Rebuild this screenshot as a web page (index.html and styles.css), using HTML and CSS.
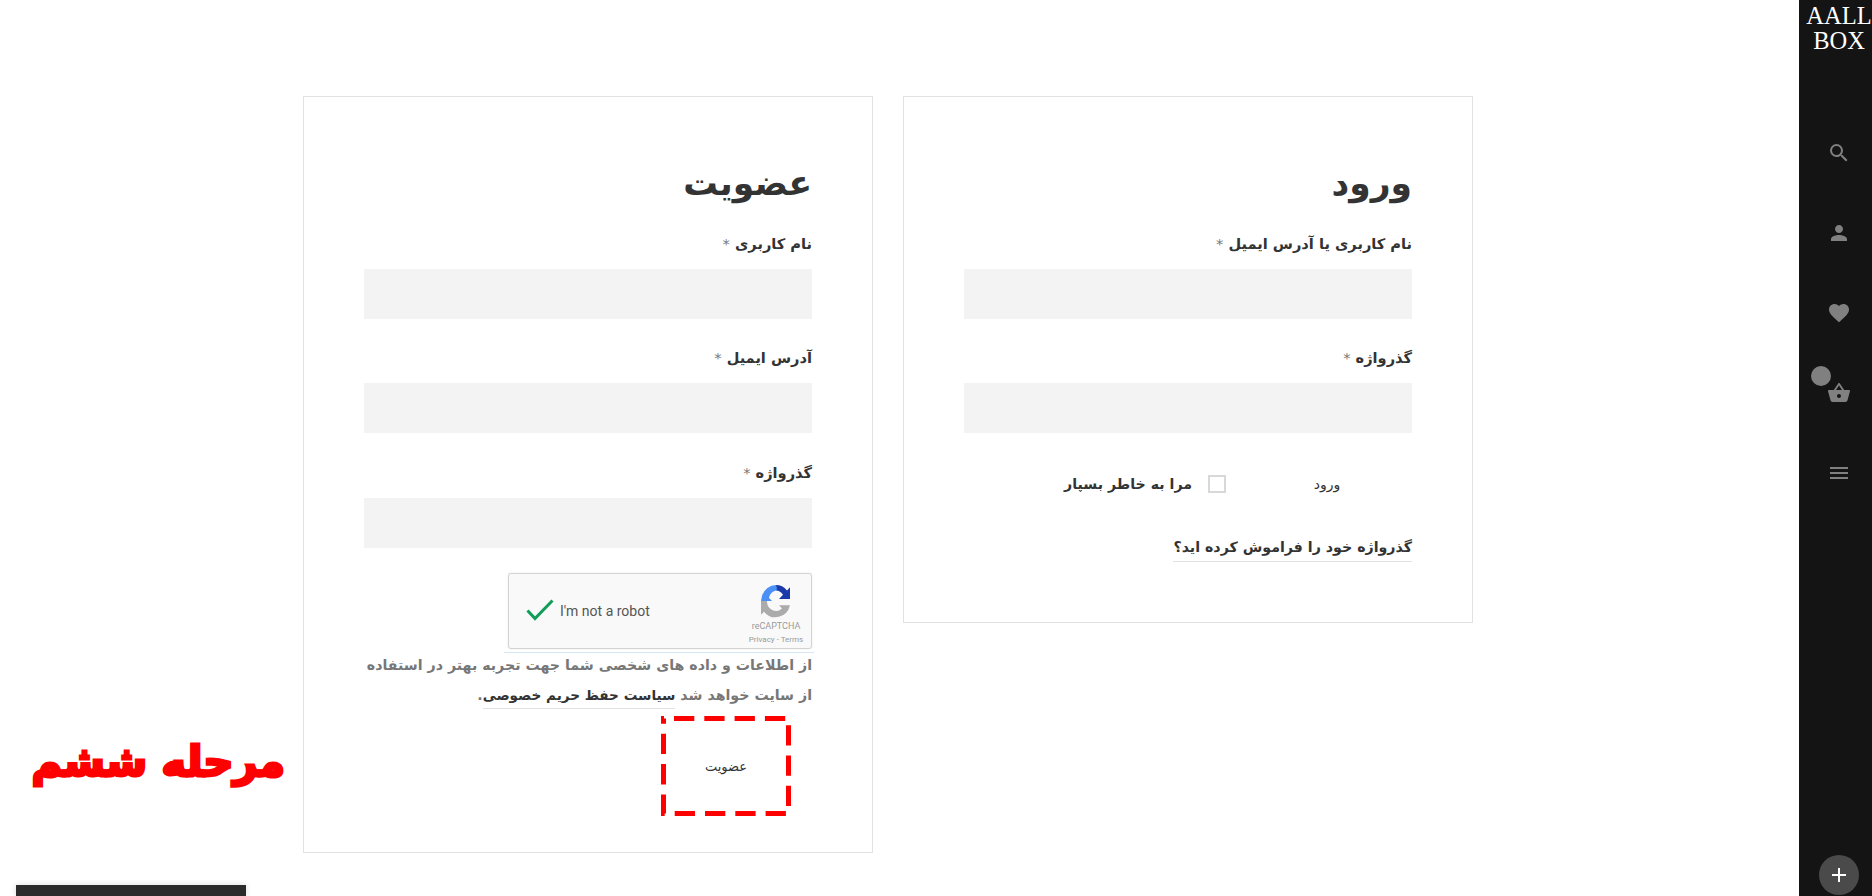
FILE: index.html
```html
<!DOCTYPE html>
<html lang="fa">
<head>
<meta charset="UTF-8">
<title>حساب کاربری</title>
<link rel="stylesheet" href="styles.css">
</head>
<body>

<main class="page">
    <section class="card">
        <h2 class="card-title">ورود</h2>
        <div class="field">
            <label class="field-label">نام کاربری یا آدرس ایمیل <span class="req">*</span></label>
            <div class="field-input"></div>
        </div>
        <div class="field">
            <label class="field-label">گذرواژه <span class="req">*</span></label>
            <div class="field-input"></div>
        </div>
        <div class="login-row">
            <button class="btn">ورود</button>
            <span class="checkbox"></span>
            <span class="remember">مرا به خاطر بسپار</span>
        </div>
        <a class="forgot">گذرواژه خود را فراموش کرده اید؟</a>
    </section>

    <section class="card">
        <h2 class="card-title">عضویت</h2>
        <div class="field">
            <label class="field-label">نام کاربری <span class="req">*</span></label>
            <div class="field-input"></div>
        </div>
        <div class="field field-second">
            <label class="field-label">آدرس ایمیل <span class="req">*</span></label>
            <div class="field-input"></div>
        </div>
        <div class="field field-last">
            <label class="field-label">گذرواژه <span class="req">*</span></label>
            <div class="field-input"></div>
        </div>
        <div class="captcha-wrap">
            <div class="captcha" dir="ltr">
                <svg class="captcha-check" width="28" height="22" viewBox="0 0 28 22"><path d="M1.5 11.5 9 19.5 26.5 1.5" fill="none" stroke="#0f9d58" stroke-width="3"/></svg>
                <span class="captcha-text">I'm not a robot</span>
                <div class="captcha-brand">
                    <svg width="32" height="34" viewBox="0 0 32 32" preserveAspectRatio="none">
                        <path d="M16 1a15 15 0 0 1 11 5l3-3v11H19l4-4a9 9 0 0 0-7-4z" fill="#1c3aa9"/>
                        <path d="M16 1A15 15 0 0 0 2 11l-1 5h11l-2-2-1-1a9 9 0 0 1 7-7c2-.5 0-5 0-5z" fill="#4a90f5"/>
                        <path d="M1 16h6v1a9 9 0 0 0 15 6l-3-3h11A15 15 0 0 1 4 26l-3 3z" fill="#ababab"/>
                    </svg>
                    <span class="captcha-name">reCAPTCHA</span>
                    <span class="captcha-links">Privacy - Terms</span>
                </div>
            </div>
        </div>
        <p class="privacy">از اطلاعات و داده های شخصی شما جهت تجربه بهتر در استفاده از سایت خواهد شد <a class="privacy-link">سیاست حفظ حریم خصوصی</a>.</p>
        <button class="btn btn-marked">
            <svg class="dash-mark" width="130" height="100" viewBox="0 0 130 100"><rect x="2.5" y="2.5" width="125" height="95" fill="none" stroke="#f00" stroke-width="5" stroke-dasharray="20.3 10" stroke-dashoffset="-10.5"/></svg>
            عضویت
        </button>
    </section>
</main>

<div class="step-note">مرحله ششم</div>
<div class="bottom-tab"></div>

<aside class="sidebar">
    <div class="logo">AALL<br>BOX</div>
    <ul class="side-icons">
        <li><svg width="24" height="24" viewBox="0 0 24 24"><path d="M15.5 14h-.79l-.28-.27A6.471 6.471 0 0 0 16 9.5 6.5 6.5 0 1 0 9.5 16c1.61 0 3.09-.59 4.23-1.57l.27.28v.79l5 4.99L20.49 19l-4.99-5zm-6 0C7.01 14 5 11.99 5 9.5S7.01 5 9.5 5 14 7.01 14 9.5 11.99 14 9.5 14z"/></svg></li>
        <li><svg width="24" height="24" viewBox="0 0 24 24"><path d="M12 12c2.21 0 4-1.79 4-4s-1.79-4-4-4-4 1.79-4 4 1.79 4 4 4zm0 2c-2.67 0-8 1.34-8 4v2h16v-2c0-2.66-5.33-4-8-4z"/></svg></li>
        <li><svg width="24" height="24" viewBox="0 0 24 24"><path d="M12 21.35l-1.45-1.32C5.4 15.36 2 12.28 2 8.5 2 5.42 4.42 3 7.5 3c1.74 0 3.41.81 4.5 2.09C13.09 3.81 14.76 3 16.5 3 19.58 3 22 5.42 22 8.5c0 3.78-3.4 6.86-8.55 11.54L12 21.35z"/></svg></li>
        <li class="basket"><span class="basket-count"></span><svg width="24" height="24" viewBox="0 0 24 24"><path d="M17.21 9l-4.38-6.56c-.19-.28-.51-.42-.83-.42-.32 0-.64.14-.83.43L6.79 9H2c-.55 0-1 .45-1 1 0 .09.01.18.04.27l2.54 9.27c.23.84 1 1.46 1.92 1.46h13c.92 0 1.69-.62 1.93-1.46l2.54-9.27L23 10c0-.55-.45-1-1-1h-4.79zM9 9l3-4.4L15 9H9zm3 8c-1.1 0-2-.9-2-2s.9-2 2-2 2 .9 2 2-.9 2-2 2z"/></svg></li>
        <li><svg width="24" height="24" viewBox="0 0 24 24"><path d="M3 18h18v-2H3v2zm0-5h18v-2H3v2zm0-7v2h18V6H3z"/></svg></li>
    </ul>
    <div class="plus-btn"><svg width="14" height="14" viewBox="0 0 14 14"><path d="M6 0h2v6h6v2H8v6H6V8H0V6h6z"/></svg></div>
</aside>

</body>
</html>
```

FILE: styles.css
```css
html, body {
    margin: 0;
    height: 896px;
    overflow: hidden;
}
body {
    font-family: "DejaVu Sans", sans-serif;
    background-color: #fff;
    color: #333;
}
.page {
    direction: rtl;
    display: flex;
    align-items: flex-start;
    gap: 30px;
    padding: 96px 399px 0 0;
}
.card {
    box-sizing: border-box;
    width: 570px;
    padding: 60px 60px 36px;
    border: 1px solid #e2e2e2;
}
.card-title {
    margin: -4px 0 19px;
    font-size: 34.5px;
    line-height: 60px;
    font-weight: 700;
    color: #333;
}
.field {
    margin-bottom: 27px;
}
.field-second {
    margin-bottom: 28px;
}
.field-last {
    margin-bottom: 25px;
}
.field-label {
    display: block;
    margin-bottom: 13px;
    font-size: 14.6px;
    line-height: 24px;
    font-weight: 700;
    color: #333;
}
.req {
    color: #777;
    font-weight: 400;
}
.field-input {
    height: 50px;
    background-color: #f3f3f3;
}
.btn {
    display: block;
    box-sizing: border-box;
    width: 128px;
    margin-right: 21px;
    padding: 0;
    background: none;
    border: none;
    font-family: inherit;
    font-size: 14px;
    color: #333;
}
.login-row {
    display: flex;
    align-items: center;
    height: 24px;
    margin-top: 39px;
    margin-bottom: 39px;
}
.checkbox {
    box-sizing: border-box;
    width: 18px;
    height: 18px;
    margin-right: 37px;
    border: 2px solid #d8d8d8;
}
.remember {
    margin-right: 16px;
    font-size: 14.2px;
    font-weight: 700;
    color: #333;
}
.forgot {
    display: block;
    width: fit-content;
    margin-bottom: 24px;
    padding-bottom: 2px;
    border-bottom: 1px solid #e2e2e2;
    font-size: 14.2px;
    line-height: 24px;
    font-weight: 700;
    color: #333;
}
.captcha-wrap {
    width: 308px;
    padding-bottom: 3px;
    border-bottom: 1px solid #d7e6f5;
    margin-right: -2px;
    padding-right: 2px;
}
.captcha {
    box-sizing: border-box;
    display: flex;
    align-items: center;
    width: 304px;
    height: 76px;
    padding-left: 17px;
    background-color: #f9f9f9;
    border: 1px solid #d3d3d3;
    border-radius: 3px;
    box-shadow: 0 0 2px rgba(0, 0, 0, 0.1);
    font-family: Roboto, sans-serif;
}
.captcha-check {
    margin-top: -3px;
}
.captcha-text {
    margin-left: 6px;
    font-size: 14px;
    color: #555;
}
.captcha-brand {
    display: flex;
    flex-direction: column;
    align-items: center;
    margin-left: auto;
    margin-right: -1px;
    width: 72px;
    padding-top: 6px;
}
.captcha-name {
    margin-top: 1px;
    font-size: 9px;
    line-height: 14px;
    color: #999;
}
.captcha-links {
    margin-top: 2px;
    font-size: 8px;
    line-height: 10px;
    color: #999;
}
.privacy {
    margin: -3px 0 6px;
    font-size: 14.2px;
    line-height: 30px;
    font-weight: 700;
    color: #777;
}
.privacy-link {
    padding-bottom: 5px;
    border-bottom: 1px solid #e2e2e2;
    font-size: 13.6px;
    color: #333;
}
.btn-marked {
    position: relative;
    width: 130px;
    height: 100px;
    margin-right: 21px;
    font-size: 13px;
}
.dash-mark {
    position: absolute;
    left: 0;
    top: 0;
}
.step-note {
    position: absolute;
    left: 33px;
    top: 732px;
    direction: rtl;
    width: 252px;
    font-size: 41.5px;
    line-height: 60px;
    font-weight: 700;
    color: #f00;
    -webkit-text-stroke: 3px #f00;
    white-space: nowrap;
}
.bottom-tab {
    position: absolute;
    left: 16px;
    top: 885px;
    width: 230px;
    height: 11px;
    background-color: #2b2b2b;
    box-shadow: 0 0 6px rgba(0, 0, 0, 0.15);
}
.sidebar {
    position: absolute;
    top: 0;
    right: 0;
    box-sizing: border-box;
    display: flex;
    flex-direction: column;
    align-items: center;
    width: 73px;
    height: 896px;
    padding-left: 7px;
    padding-bottom: 1px;
    background-color: #141414;
}
.logo {
    margin-top: 3px;
    font-family: "Liberation Serif", serif;
    font-size: 24.5px;
    line-height: 25px;
    text-align: center;
    color: #fff;
}
.side-icons {
    display: flex;
    flex-direction: column;
    gap: 56px;
    margin: 88px 0 0;
    padding: 0;
    list-style: none;
}
.side-icons li {
    width: 24px;
    height: 24px;
}
.side-icons svg {
    display: block;
    fill: #808080;
}
.basket {
    position: relative;
}
.basket-count {
    position: absolute;
    left: -16px;
    top: -15px;
    width: 20px;
    height: 20px;
    border-radius: 50%;
    background-color: #808080;
}
.plus-btn {
    display: flex;
    align-items: center;
    justify-content: center;
    width: 40px;
    height: 40px;
    margin-top: auto;
    border-radius: 50%;
    background-color: #4a4a4a;
}
.plus-btn svg {
    fill: #fff;
}
```
